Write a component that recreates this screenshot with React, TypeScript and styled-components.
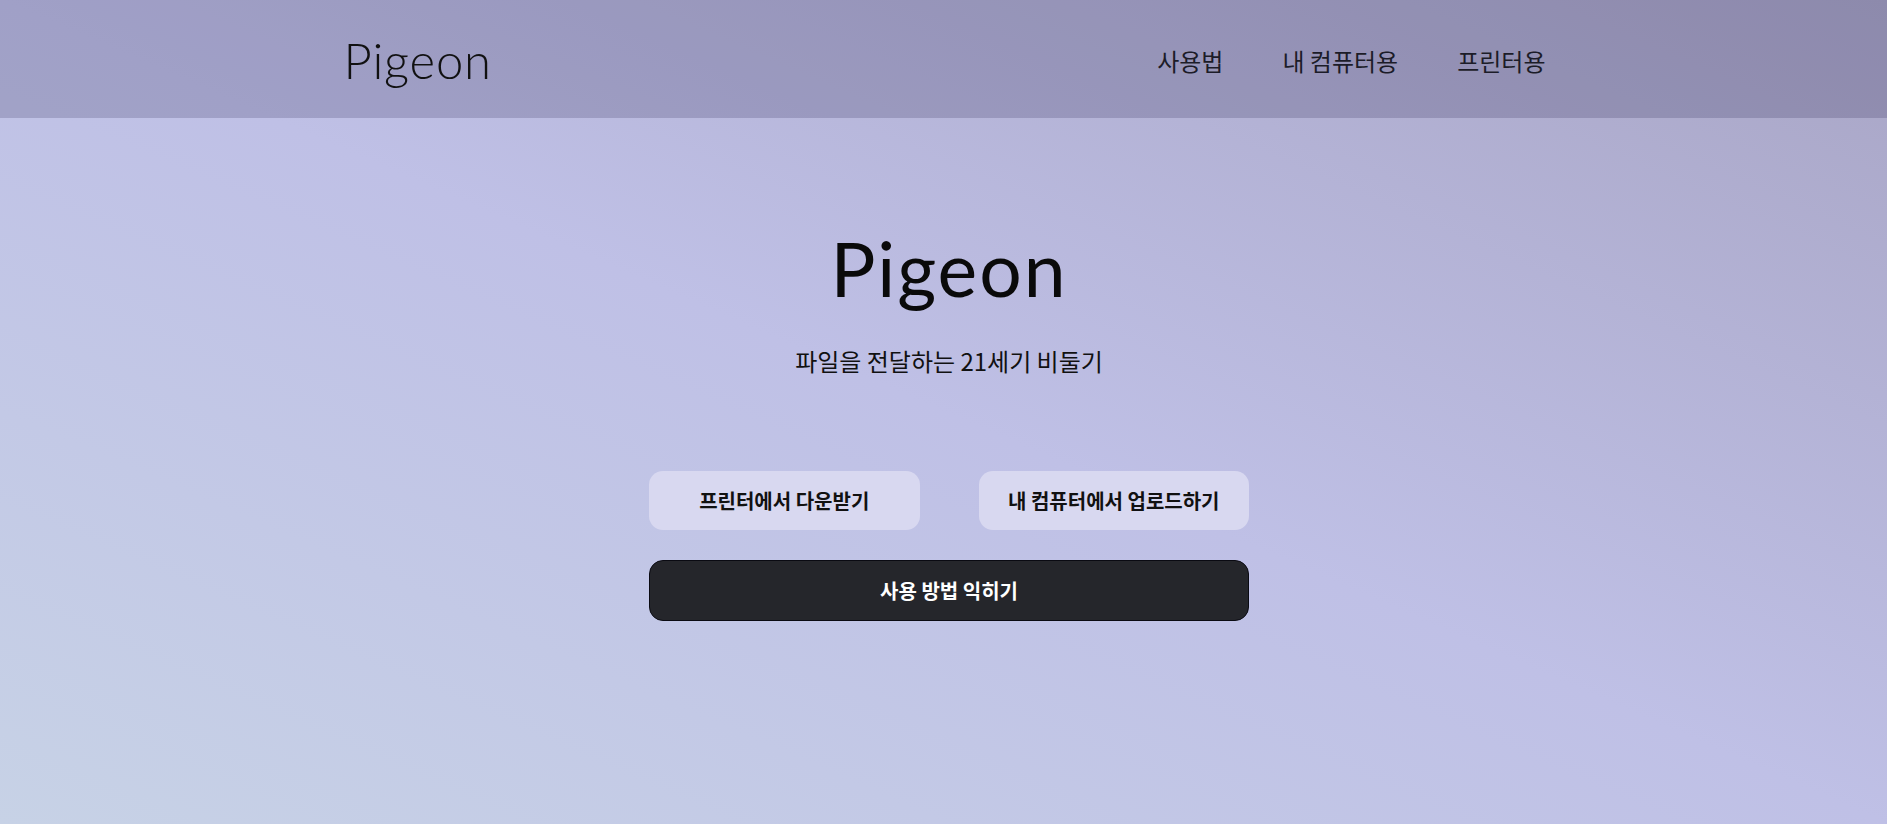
import React from "react";
import styled, { createGlobalStyle } from "styled-components";

const GlobalStyle = createGlobalStyle`
  html, body {
    margin: 0;
    padding: 0;
    height: 100%;
  }
  body {
    font-family: "Noto Sans CJK KR", "Noto Sans", sans-serif;
    color: #111;
  }
  #root {
    min-height: 100vh;
  }
  * { box-sizing: border-box; }
`;

const Page = styled.div`
  min-height: 100vh;
  display: flex;
  flex-direction: column;
  background: linear-gradient(to top right, #c7d2e6 0%, #bfc0e6 50%, #a8a5c5 100%);
`;

const Header = styled.header`
  height: 118px;
  background: rgba(20, 15, 60, 0.18);
  display: flex;
  justify-content: center;
`;

const HeaderInner = styled.div`
  width: 1200px;
  display: flex;
  align-items: center;
  justify-content: space-between;
`;

const Logo = styled.div`
  font-family: "Lato", "Inter", sans-serif;
  font-weight: 300;
  font-size: 49px;
  letter-spacing: 0.8px;
  color: #111;
  margin-top: 2px;
`;

const Nav = styled.nav`
  display: flex;
  gap: 59px;
  margin-top: 2px;
  margin-right: -2px;
`;

const NavItem = styled.a`
  font-family: "Noto Sans CJK KR", sans-serif;
  font-size: 24px;
  font-weight: 400;
  color: #1c1c28;
  text-decoration: none;
  cursor: pointer;
`;

const Hero = styled.main`
  display: flex;
  flex-direction: column;
  align-items: center;
  padding-top: 113px;
  padding-left: 11px;
`;

const Title = styled.h1`
  margin: 0;
  font-family: "Lato", "Inter", sans-serif;
  font-weight: 400;
  font-size: 75px;
  letter-spacing: 2px;
  line-height: 1;
  color: #0a0a0a;
`;

const Subtitle = styled.p`
  margin: 37px 0 0;
  font-family: "Noto Sans CJK KR", sans-serif;
  font-size: 24px;
  font-weight: 400;
  color: #111;
`;

const Buttons = styled.div`
  margin-top: 93px;
  width: 600px;
  display: grid;
  grid-template-columns: 1fr 1fr;
  column-gap: 59px;
  row-gap: 30px;
`;

const LightButton = styled.button`
  height: 59px;
  border: none;
  border-radius: 14px;
  background: #d8d8f0;
  font-family: "Noto Sans CJK KR", sans-serif;
  font-size: 20px;
  font-weight: 700;
  color: #111;
  cursor: pointer;
`;

const DarkButton = styled.button`
  grid-column: 1 / -1;
  height: 61px;
  border: 1px solid #0a0a12;
  border-radius: 14px;
  background: #25262b;
  font-family: "Noto Sans CJK KR", sans-serif;
  font-size: 20px;
  font-weight: 700;
  color: #fff;
  cursor: pointer;
`;

export default function App() {
  return (
    <>
      <GlobalStyle />
      <Page>
        <Header>
          <HeaderInner>
            <Logo>Pigeon</Logo>
            <Nav>
              <NavItem>사용법</NavItem>
              <NavItem>내 컴퓨터용</NavItem>
              <NavItem>프린터용</NavItem>
            </Nav>
          </HeaderInner>
        </Header>
        <Hero>
          <Title>Pigeon</Title>
          <Subtitle>파일을 전달하는 21세기 비둘기</Subtitle>
          <Buttons>
            <LightButton>프린터에서 다운받기</LightButton>
            <LightButton>내 컴퓨터에서 업로드하기</LightButton>
            <DarkButton>사용 방법 익히기</DarkButton>
          </Buttons>
        </Hero>
      </Page>
    </>
  );
}
